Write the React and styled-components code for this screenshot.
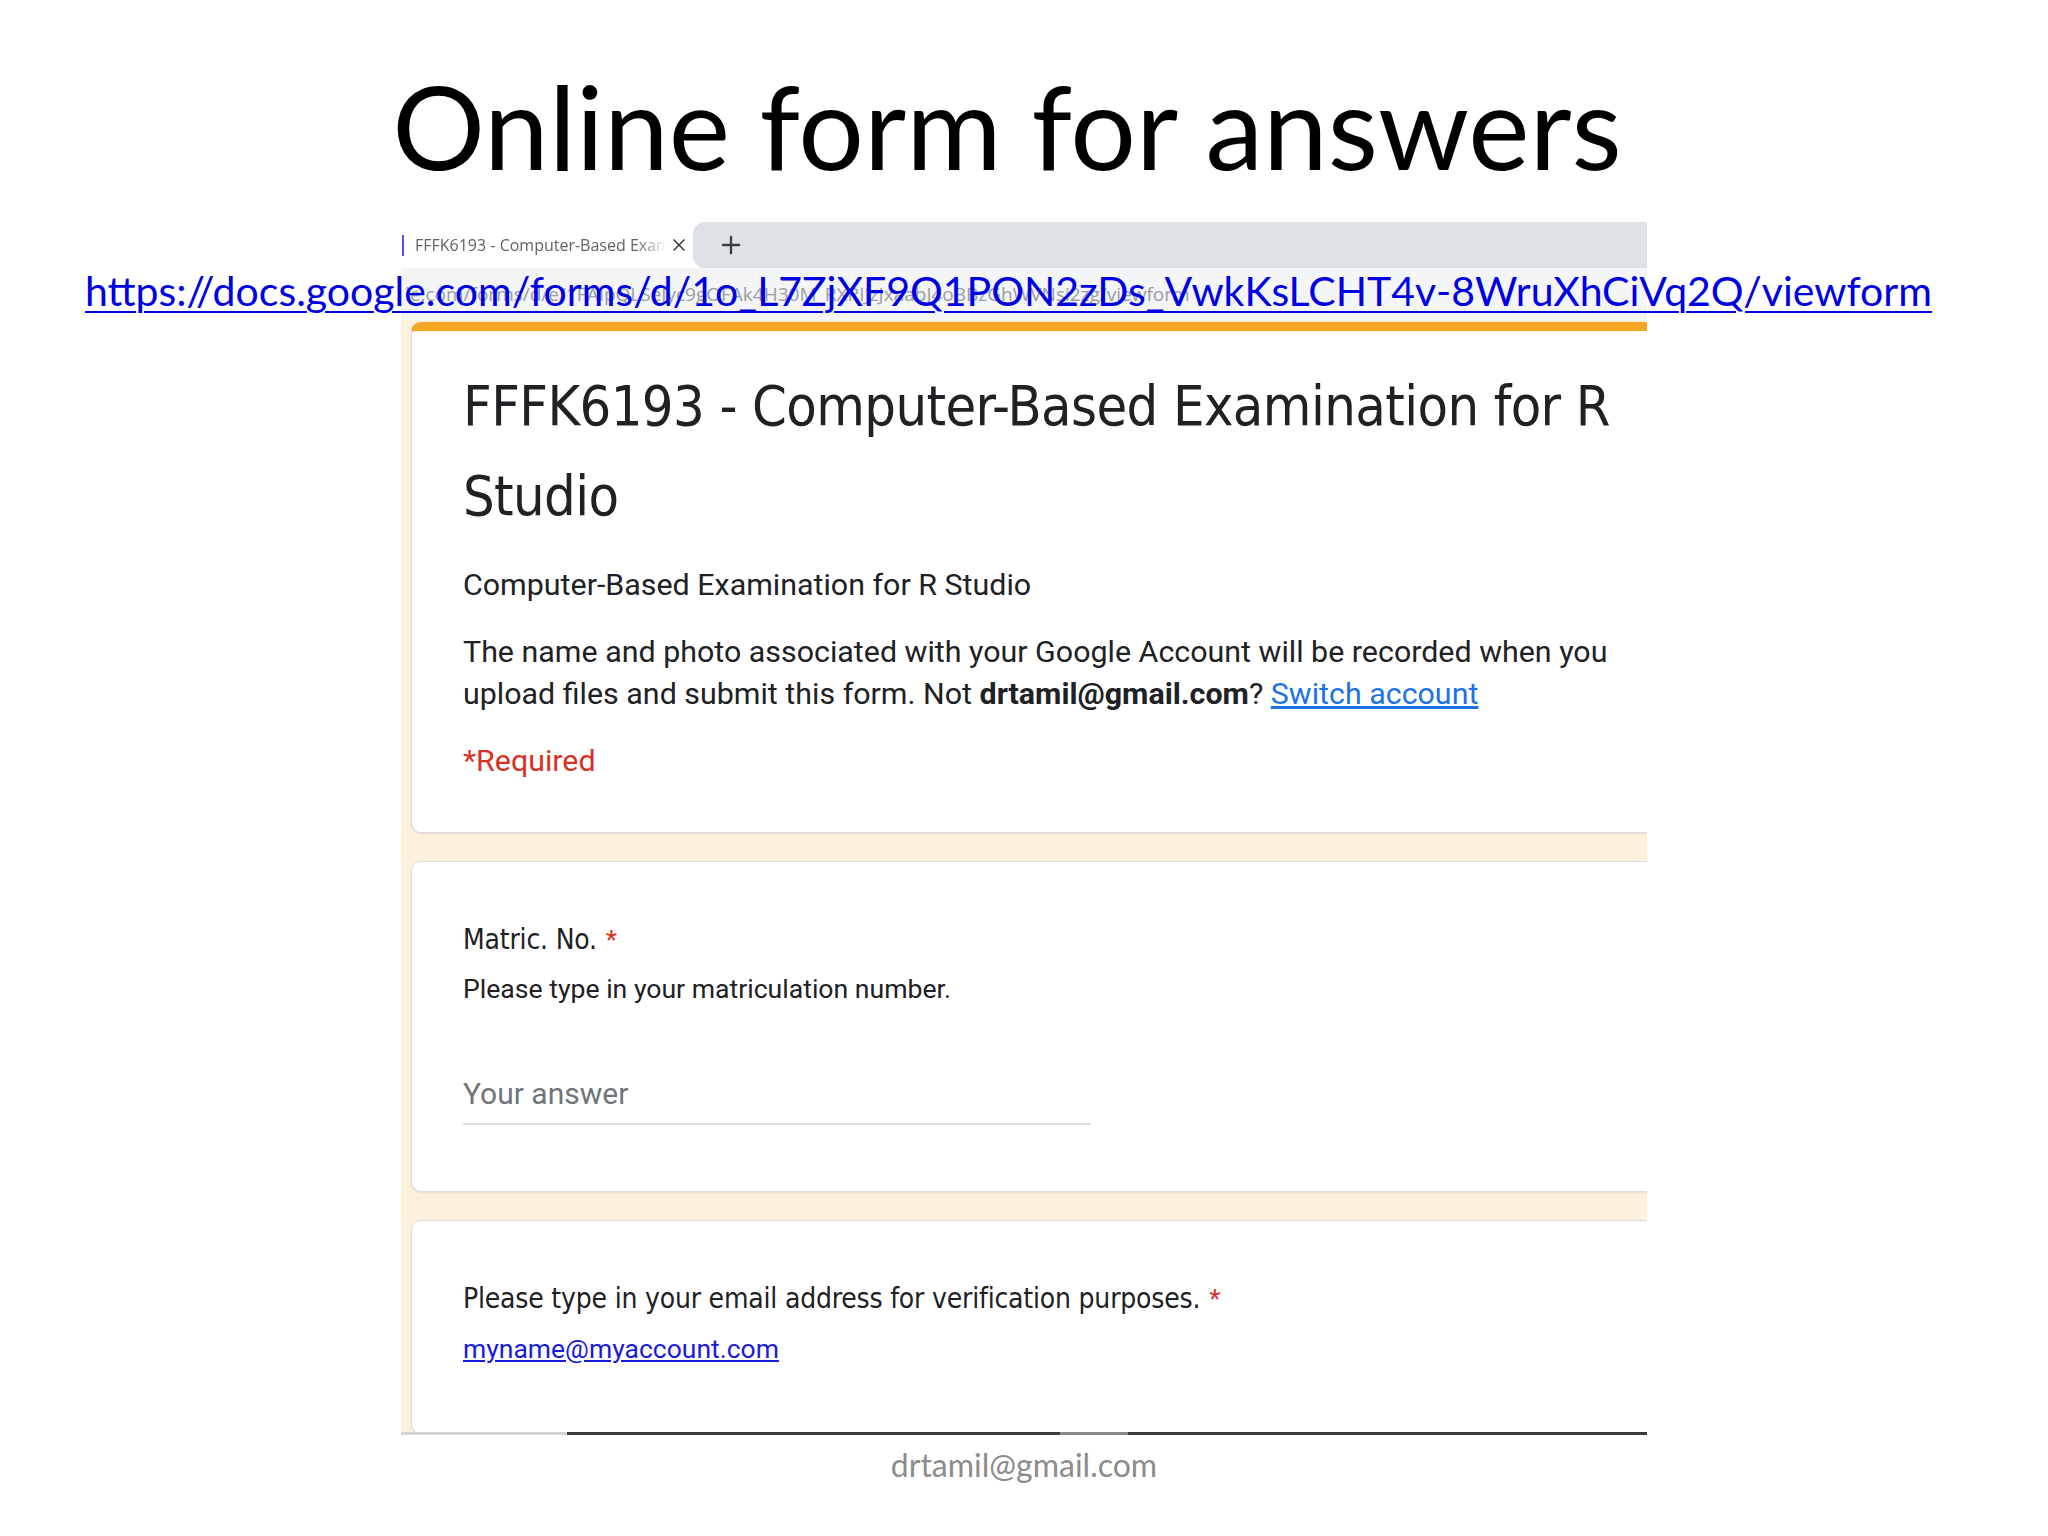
import React from 'react'
import styled, { createGlobalStyle } from 'styled-components'
import { X, Plus } from 'lucide-react'

//Global
const GlobalStyle = createGlobalStyle`
    * { box-sizing: border-box; }
    body {
        margin: 0;
        background: #ffffff;
        font-family: 'Lato', sans-serif;
    }
`

//Slide
const Page = styled.div`
    position: relative;
    width: 2048px;
    height: 1536px;
    overflow: hidden;
    background: #ffffff;
    display: flex;
    flex-direction: column;
`
const SlideTitle = styled.h1`
    margin: 69px 0 0;
    padding-right: 34px;
    text-align: center;
    font-family: 'Lato', sans-serif;
    font-weight: 400;
    font-size: 116px;
    line-height: 114px;
    color: #000000;
`
const BigLink = styled.a`
    position: absolute;
    left: 85px;
    top: 267px;
    font-family: 'Lato', sans-serif;
    font-size: 41px;
    line-height: 48px;
    color: #0000e6;
    white-space: nowrap;
    text-decoration: underline;
    text-decoration-thickness: 2px;
    text-underline-offset: 5px;
`
const Footer = styled.div`
    margin-top: 11px;
    text-align: center;
    font-family: 'Lato', sans-serif;
    font-size: 32px;
    line-height: 38px;
    color: #8c8c8c;
`

//Screenshot of the browser
const Shot = styled.div`
    margin: 39px 0 0 401px;
    width: 1246px;
    display: flex;
    flex-direction: column;
`
const TabStrip = styled.div`
    display: flex;
    height: 46px;
`
const Tab = styled.div`
    width: 292px;
    display: flex;
    align-items: center;
    background: #ffffff;
`
const TabMark = styled.span`
    flex-shrink: 0;
    width: 2px;
    height: 21px;
    margin-left: 1px;
    background: #7048e8;
`
const TabLabel = styled.span`
    margin-left: 11px;
    width: 252px;
    white-space: nowrap;
    overflow: hidden;
    font-family: 'Open Sans', sans-serif;
    font-size: 16px;
    color: #5f6368;
    -webkit-mask-image: linear-gradient(to right, #000 88%, transparent);
    mask-image: linear-gradient(to right, #000 88%, transparent);
`
const TabButton = styled.span`
    display: flex;
    justify-content: center;
    width: 24px;
    color: #3c4043;
`
const NewTabZone = styled.div`
    flex: 1;
    display: flex;
    align-items: center;
    padding-left: 24px;
    background: #dee1e6;
    border-radius: 12px 0 0 12px;
    color: #3c4043;
`
const AddressRow = styled.div`
    height: 52px;
    display: flex;
    align-items: center;
    padding-left: 4px;
    overflow: hidden;
    background: #f4f5f6;
`
const AddressText = styled.span`
    white-space: nowrap;
    font-family: 'Open Sans', sans-serif;
    font-size: 19px;
    color: #9a9ea3;
`

//Form
const FormArea = styled.div`
    height: 1112px;
    padding: 2px 0 0 10px;
    overflow: hidden;
    display: flex;
    flex-direction: column;
    gap: 28px;
    background: #fdf0dc;
`
const Card = styled.div`
    flex-shrink: 0;
    width: 1300px;
    background: #ffffff;
    border: 1px solid #dadce0;
    border-radius: 10px;
    box-shadow: 0 1px 2px rgba(0, 0, 0, 0.08);
    padding: 58px 52px 66px 51px;
`
const HeaderCard = styled(Card)`
    border-top: 9px solid #f4a622;
    padding-top: 30px;
    padding-bottom: 50px;
`
const FormTitle = styled.h2`
    margin: 0;
    font-family: 'Liberation Sans Narrow', 'DejaVu Sans Condensed', sans-serif;
    font-weight: 400;
    font-size: 55.5px;
    letter-spacing: -0.6px;
    line-height: 90px;
    color: #202124;
`
const BodyText = styled.p`
    margin: ${props => props.$gap || 25}px 0 0;
    font-family: 'Roboto', sans-serif;
    font-size: 30.4px;
    line-height: 42px;
    color: ${props => props.$color || '#202124'};
    b { font-weight: 700; }
`
const SwitchLink = styled.a`
    color: #1a73e8;
    text-decoration: underline;
`
const QuestionTitle = styled.div`
    font-family: 'Liberation Sans Narrow', 'DejaVu Sans Condensed', sans-serif;
    font-size: 28px;
    letter-spacing: -0.2px;
    line-height: 40px;
    color: #202124;
`
const Star = styled.span`
    margin-left: 9px;
    font-family: 'Roboto', sans-serif;
    font-size: 26px;
    color: #d93025;
`
const HelpText = styled.div`
    margin-top: 11px;
    font-family: 'Roboto', sans-serif;
    font-size: 26.6px;
    line-height: 36px;
    color: #202124;
`
const AnswerField = styled.div`
    margin-top: 66px;
    width: 628px;
    padding-bottom: 8px;
    border-bottom: 2px solid #e0e0e0;
    font-family: 'Roboto', sans-serif;
    font-size: 30px;
    line-height: 42px;
    color: #70757a;
`
const EmailLink = styled.a`
    display: block;
    margin-top: 12px;
    font-family: 'Roboto', sans-serif;
    font-size: 26.5px;
    line-height: 36px;
    color: #1a1adf;
    text-decoration: underline;
`
const ScrollLine = styled.div`
    display: flex;
    height: 3px;
`
const ScrollPart = styled.span`
    width: ${props => props.$w ? props.$w + 'px' : 'auto'};
    flex: ${props => props.$w ? 'none' : 1};
    background: ${props => props.$c};
`

//Main Component
function App() {
    return (
        <>
        <GlobalStyle />
        <Page>
            <SlideTitle>Online form for answers</SlideTitle>
            <Shot>
                <TabStrip>
                    <Tab>
                        <TabMark />
                        <TabLabel>FFFK6193 - Computer-Based Examination for R Studio</TabLabel>
                        <TabButton><X size={20} strokeWidth={2} /></TabButton>
                    </Tab>
                    <NewTabZone><Plus size={28} strokeWidth={2} /></NewTabZone>
                </TabStrip>
                <AddressRow>
                    <AddressText>le.com/forms/d/e/1FAIpQLSeJyc9gOFAk4H30M_RXRIJzJxaabJ4oBBzGhWVNsi2zg/viewform</AddressText>
                </AddressRow>
                <FormArea>
                    <HeaderCard>
                        <FormTitle>FFFK6193 - Computer-Based Examination for R Studio</FormTitle>
                        <BodyText $gap={23}>Computer-Based Examination for R Studio</BodyText>
                        <BodyText>
                            The name and photo associated with your Google Account will be recorded when you
                            upload files and submit this form. Not <b>drtamil@gmail.com</b>? <SwitchLink>Switch account</SwitchLink>
                        </BodyText>
                        <BodyText $color="#d93025">*Required</BodyText>
                    </HeaderCard>
                    <Card>
                        <QuestionTitle>Matric. No.<Star>*</Star></QuestionTitle>
                        <HelpText>Please type in your matriculation number.</HelpText>
                        <AnswerField>Your answer</AnswerField>
                    </Card>
                    <Card>
                        <QuestionTitle>Please type in your email address for verification purposes.<Star>*</Star></QuestionTitle>
                        <EmailLink>myname@myaccount.com</EmailLink>
                    </Card>
                </FormArea>
                <ScrollLine>
                    <ScrollPart $w={166} $c="#d4d4d4" />
                    <ScrollPart $w={493} $c="#3b3b3b" />
                    <ScrollPart $w={68} $c="#8a8a8a" />
                    <ScrollPart $c="#3b3b3b" />
                </ScrollLine>
            </Shot>
            <Footer>drtamil@gmail.com</Footer>
            <BigLink>https://docs.google.com/forms/d/1o_L7ZjXF9Q1PON2zDs_VwkKsLCHT4v-8WruXhCiVq2Q/viewform</BigLink>
        </Page>
        </>
    )
}

export default App;
